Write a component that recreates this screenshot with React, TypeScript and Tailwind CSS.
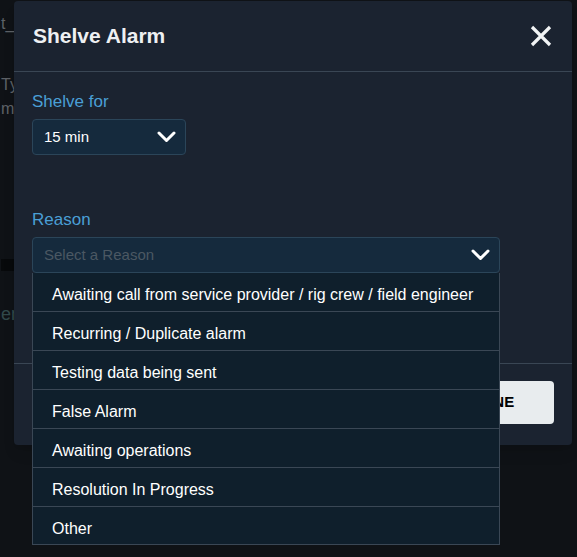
import React, { useState } from 'react';

const reasons = [
  'Awaiting call from service provider / rig crew / field engineer',
  'Recurring / Duplicate alarm',
  'Testing data being sent',
  'False Alarm',
  'Awaiting operations',
  'Resolution In Progress',
  'Other',
];

const Chevron: React.FC = () => (
  <svg width="19" height="12" viewBox="0 0 19 12" fill="none">
    <path d="M2 2l7.5 7.5L17 2" stroke="#ffffff" strokeWidth="3" strokeLinecap="round" strokeLinejoin="round" />
  </svg>
);

const App: React.FC = () => {
  const [reason, setReason] = useState<string | null>(null);
  const [open, setOpen] = useState(true);

  return (
    <div
      className="relative w-[577px] h-[557px] overflow-hidden bg-[#0f1216] text-white"
      style={{ fontFamily: '"Liberation Sans", Arial, sans-serif' }}
    >
      {/* page behind the dialog, dimmed */}
      <div className="flex flex-col text-[16px] text-[#5d6166] pt-[12px] pl-[1px]">
        <div className="h-[24px]">t_</div>
        <div className="h-[37px]"></div>
        <div className="h-[24px]">Ty</div>
        <div className="h-[24px]">m</div>
        <div className="h-[138px]"></div>
        <div className="h-[12px] bg-[#07090b] w-[40px]"></div>
        <div className="h-[30px]"></div>
        <div className="text-[#31494a] text-[18px]">er</div>
      </div>

      {/* dialog */}
      <div className="absolute left-[14px] top-[1px] w-[558px] rounded-[4px] bg-[#1b2330] shadow-lg">
        <div className="h-[71px] px-[19px] flex items-center justify-between border-b border-[#3a4654]">
          <h2 className="text-[21px] font-bold text-[#eef0f2]">Shelve Alarm</h2>
          <button className="mr-[1px]">
            <svg width="22" height="22" viewBox="0 0 22 22" fill="none">
              <path d="M2 2l18 18M20 2L2 20" stroke="#f2f4f5" strokeWidth="3.2" />
            </svg>
          </button>
        </div>

        <div className="h-[291px] px-[18px] pt-[20px]">
          <div className="text-[17px] leading-[20px] text-[#4a9fd6]">Shelve for</div>
          <div className="mt-[7px] w-[154px] h-[36px] rounded-[4px] border border-[#2b4559] bg-[#152a3d] flex items-center justify-between pl-[11px] pr-[9px]">
            <span className="text-[15px] text-white">15 min</span>
            <Chevron />
          </div>

          <div className="mt-[55px] text-[17px] leading-[20px] text-[#4a9fd6]">Reason</div>
          <div className="relative mt-[7px] w-[468px]">
            <div
              onClick={() => setOpen(!open)}
              className="h-[36px] rounded-[4px] border border-[#2b4559] bg-[#152a3d] flex items-center justify-between pl-[11px] pr-[9px] cursor-pointer"
            >
              <span className={`text-[15px] ${reason ? 'text-white' : 'text-[#4b5863]'}`}>
                {reason ?? 'Select a Reason'}
              </span>
              <Chevron />
            </div>
            {open && (
              <ul className="absolute left-0 top-[36px] w-[468px] z-10 bg-[#0f1f2c] border border-t-0 border-[#3a4755]">
                {reasons.map((r, index) => (
                  <li
                    key={index}
                    onClick={() => {
                      setReason(r);
                      setOpen(false);
                    }}
                    className={`pt-[10px] pl-[19px] text-[16px] leading-[24px] text-white cursor-pointer ${
                      index < reasons.length - 1 ? 'h-[39px] border-b border-[#3a4755]' : 'h-[37px]'
                    }`}
                  >
                    {r}
                  </li>
                ))}
              </ul>
            )}
          </div>
        </div>

        <div className="border-t border-[#3a4654] flex justify-end pt-[17px] pb-[21px] pr-[18px]">
          <button className="w-[123px] h-[43px] rounded-[4px] bg-[#e8ecee] text-black text-[15px] font-bold">
            DONE
          </button>
        </div>
      </div>
    </div>
  );
};

export default App;
